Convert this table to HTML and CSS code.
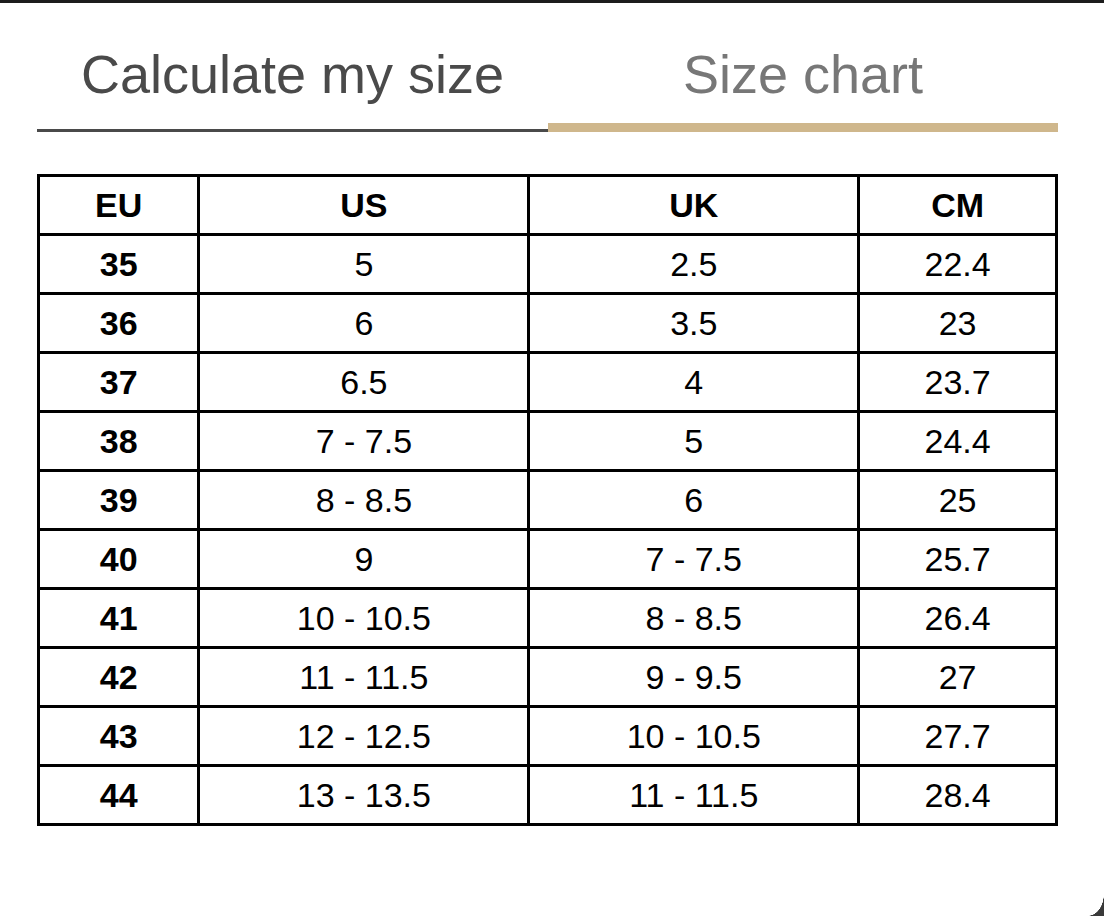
FILE: index.html
```html
<!DOCTYPE html>
<html>
<head>
<meta charset="utf-8">
<link rel="stylesheet" href="styles.css">
</head>
<body>
<div class="frame">
  <div class="tabs">
    <div class="tab tab-calc">Calculate my size</div>
    <div class="tab tab-chart">Size chart</div>
  </div>
  <table class="chart">
    <colgroup>
      <col class="c-eu"><col class="c-us"><col class="c-uk"><col class="c-cm">
    </colgroup>
    <thead>
      <tr><th>EU</th><th>US</th><th>UK</th><th>CM</th></tr>
    </thead>
    <tbody>
      <tr><th>35</th><td>5</td><td>2.5</td><td>22.4</td></tr>
      <tr><th>36</th><td>6</td><td>3.5</td><td>23</td></tr>
      <tr><th>37</th><td>6.5</td><td>4</td><td>23.7</td></tr>
      <tr><th>38</th><td>7 - 7.5</td><td>5</td><td>24.4</td></tr>
      <tr><th>39</th><td>8 - 8.5</td><td>6</td><td>25</td></tr>
      <tr><th>40</th><td>9</td><td>7 - 7.5</td><td>25.7</td></tr>
      <tr><th>41</th><td>10 - 10.5</td><td>8 - 8.5</td><td>26.4</td></tr>
      <tr><th>42</th><td>11 - 11.5</td><td>9 - 9.5</td><td>27</td></tr>
      <tr><th>43</th><td>12 - 12.5</td><td>10 - 10.5</td><td>27.7</td></tr>
      <tr><th>44</th><td>13 - 13.5</td><td>11 - 11.5</td><td>28.4</td></tr>
    </tbody>
  </table>
  <div class="corner"></div>
</div>
</body>
</html>
```

FILE: styles.css
```css
html, body {
  margin: 0;
  padding: 0;
  background: #fff;
}
body {
  font-family: "Liberation Sans", Arial, sans-serif;
}
.frame {
  position: relative;
  width: 1104px;
  height: 916px;
  box-sizing: border-box;
  border-top: 3px solid #1c1c1c;
  padding-left: 37px;
  overflow: hidden;
}
.tabs {
  display: flex;
  width: 1021px;
}
.tab {
  width: 511px;
  height: 129px;
  box-sizing: border-box;
  text-align: center;
  font-size: 54px;
  line-height: 60px;
  padding-top: 41px;
}
.tab-calc {
  color: #4a4a4a;
  border-bottom: 3px solid #4a4a4a;
}
.tab-chart {
  width: 510px;
  color: #777;
  border-bottom: 9px solid #cfb78c;
}
.chart {
  margin-top: 42px;
  width: 1021px;
  border-collapse: collapse;
  table-layout: fixed;
  font-size: 34px;
  color: #000;
}
.chart th, .chart td {
  border: 3px solid #000;
  padding: 0;
  height: 56px;
  line-height: 56px;
  text-align: center;
  vertical-align: middle;
}
.chart th {
  font-weight: bold;
}
.c-eu { width: 159px; }
.c-us { width: 327px; }
.c-uk { width: 327px; }
.c-cm { width: 196px; }
.corner {
  position: absolute;
  right: 0;
  bottom: 0;
  width: 16px;
  height: 22px;
  background: radial-gradient(ellipse 16px 22px at 0 0, transparent 98%, #3a3a3a 100%);
}
```
